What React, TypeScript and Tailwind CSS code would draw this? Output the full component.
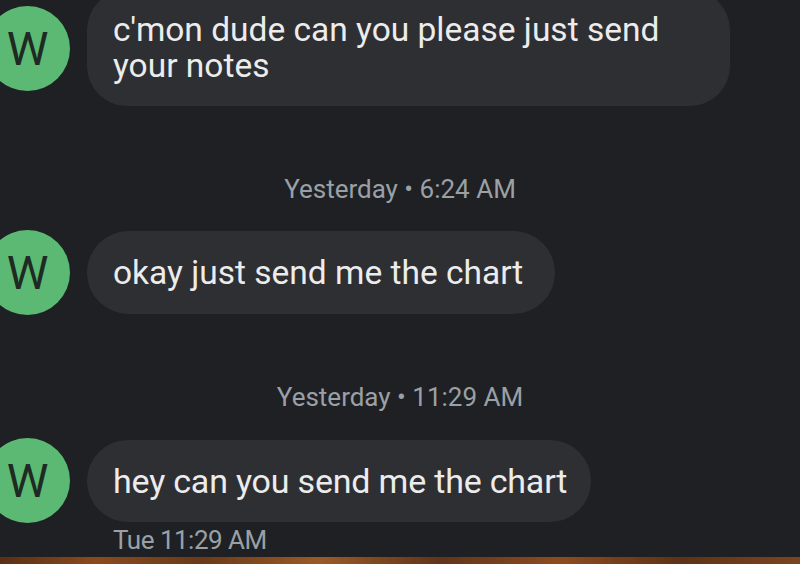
import React from 'react';

const Avatar: React.FC = () => (
  <div className="ml-[-15px] flex h-[85px] w-[85px] shrink-0 items-center justify-center rounded-full bg-[#5bb974] text-[47px] leading-none text-[#1e2a22]">
    W
  </div>
);

const Stamp: React.FC<{ children: React.ReactNode; className?: string }> = ({ children, className }) => (
  <div className={`text-center text-[26px] leading-[30px] text-[#9aa0a6] ${className ?? ''}`}>{children}</div>
);

export default function App() {
  return (
    <div className="flex h-[564px] w-[800px] flex-col overflow-hidden bg-[#1f2023] font-['Roboto',sans-serif]">
      {/* first incoming message, partly scrolled off */}
      <div className="mt-[-10px] flex items-center gap-[17px]">
        <Avatar />
        <div className="w-[643px] rounded-[40px] bg-[#2e2f33] px-[26px] py-[22px] text-[33.5px] leading-[36px] text-[#ececec]">
          c'mon dude can you please just send
          <br />
          your notes
        </div>
      </div>

      <Stamp className="mt-[68px]">Yesterday • 6:24 AM</Stamp>

      <div className="mt-[26px] flex items-center gap-[17px]">
        <Avatar />
        <div className="rounded-full bg-[#2e2f33] py-[21px] pl-[26px] pr-[32px] text-[33.5px] leading-[41px] text-[#ececec]">
          okay just send me the chart
        </div>
      </div>

      <Stamp className="mt-[67px]">Yesterday • 11:29 AM</Stamp>

      <div className="mt-[26px] flex items-center gap-[17px]">
        <Avatar />
        <div className="rounded-full bg-[#2e2f33] py-[20px] pl-[26px] pr-[24px] text-[34px] leading-[42px] tracking-[-0.2px] text-[#ececec]">
          hey can you send me the chart
        </div>
      </div>
      <div className="mt-[3px] pl-[113px] text-[26px] leading-[28px] tracking-[-0.5px] text-[#9aa0a6]">Tue 11:29 AM</div>

      {/* desk edge peeking in at the bottom */}
      <div className="mt-auto h-[7px] bg-[linear-gradient(90deg,#5a2f14,#8a4a1e_12%,#6b3a18_25%,#9a5a26_40%,#62341a_55%,#8c4c20_70%,#5e3216_85%,#7d4420)]" />
    </div>
  );
}
